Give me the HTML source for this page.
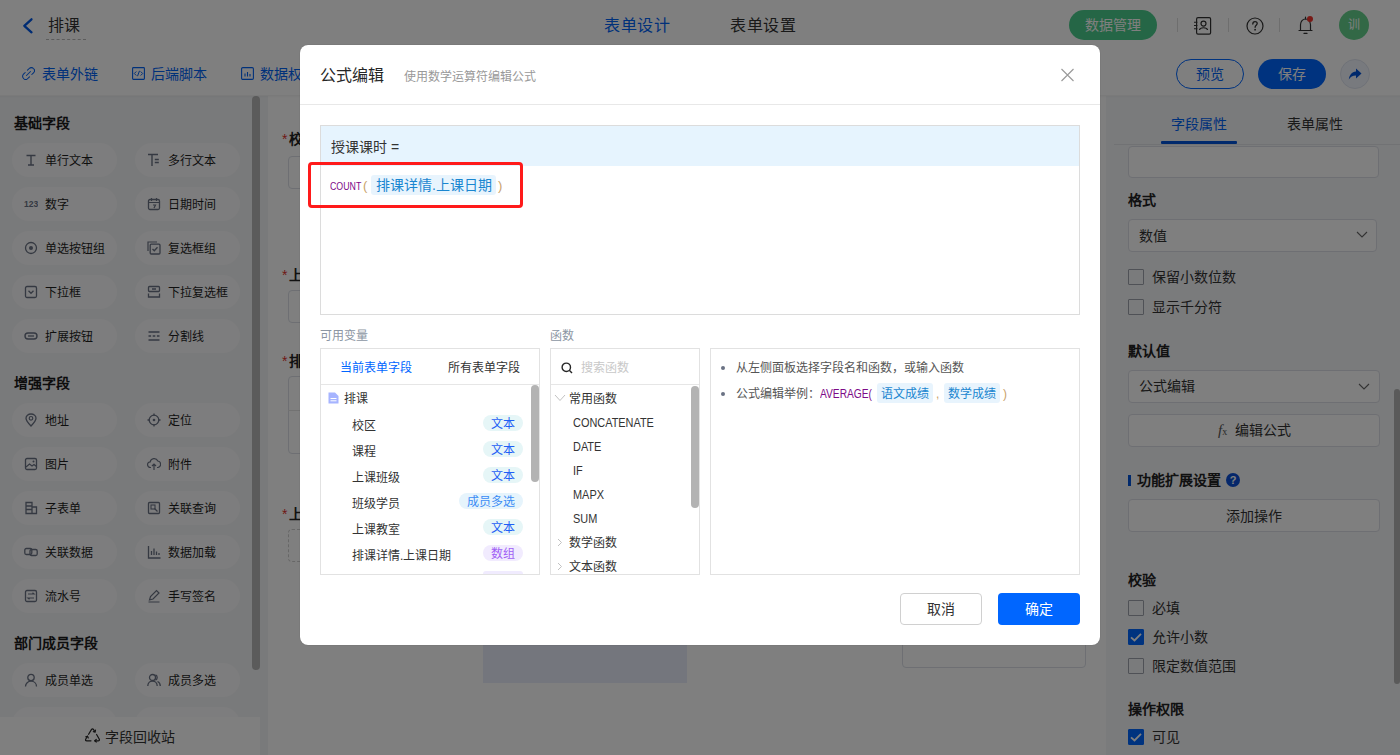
<!DOCTYPE html>
<html lang="zh-CN"><head><meta charset="utf-8">
<style>
*{box-sizing:border-box;margin:0;padding:0}
html,body{width:1400px;height:755px;overflow:hidden;background:#fff;font-family:"Liberation Sans",sans-serif;color:#333}
.a{position:absolute}
.t{white-space:nowrap;line-height:1}
/* header */
#hdr{left:0;top:0;width:1400px;height:51px;background:#fff;border-bottom:1px solid #f0f0f0}
#tb{left:0;top:50px;width:1400px;height:46px;background:#fff}
#side{left:0;top:96px;width:268px;height:659px;background:#f3f4f7}
#canvas{left:268px;top:96px;width:838px;height:659px;background:#fff}
#right{left:1106px;top:96px;width:294px;height:659px;background:#f5f6f8}
.chip{position:absolute;width:105px;height:34px;border-radius:17px;background:#fbfbfc}
.chip span{position:absolute;left:33px;top:11px;font-size:12px;line-height:14px;color:#1f1f1f;white-space:nowrap}
.chip svg{position:absolute;left:13px;top:10px}
.sh{position:absolute;left:14px;font-size:14px;font-weight:bold;color:#1a1a1a;line-height:16px;white-space:nowrap}
.inp{position:absolute;border:1px solid #dcdfe6;border-radius:4px;background:#fff}
.lbl{position:absolute;font-size:14px;font-weight:bold;color:#222;line-height:16px;white-space:nowrap}
.lbl i{color:#e0322c;font-style:normal;font-weight:normal;margin-right:2px}
.cb{position:absolute;left:1128px;width:16px;height:16px;border:1px solid #9ea3ad;border-radius:1px;background:transparent}
.cbk{background:#0066ff;border-color:#0066ff}
.cbt{position:absolute;left:1152px;font-size:14px;line-height:16px;color:#333;white-space:nowrap}
#mask{left:0;top:0;width:1400px;height:755px;background:rgba(0,0,0,.5)}
/* modal */
#modal{left:300px;top:45px;width:800px;height:600px;background:#fff;border-radius:8px;box-shadow:0 0 1px rgba(0,0,0,.35)}
.box{position:absolute;border:1px solid #e2e2e2;background:#fff}
.tag{position:absolute;height:16px;border-radius:8px;font-size:12px;line-height:19px;text-align:center;white-space:nowrap}
.vrow{position:absolute;left:352px;font-size:12px;line-height:14px;color:#333;white-space:nowrap}
.frow{position:absolute;left:573px;font-size:12px;line-height:14px;color:#333;white-space:nowrap;transform:scaleX(.91);transform-origin:0 0}
</style></head><body>
<!-- header -->
<div id="hdr" class="a"></div>
<svg class="a" style="left:21px;top:17px" width="14" height="17" viewBox="0 0 14 17"><path d="M10.5 2.3 L3.3 8.8 L10.5 15.3" fill="none" stroke="#0058e6" stroke-width="2.3" stroke-linecap="round" stroke-linejoin="round"/></svg>
<div class="a t" style="left:48px;top:18px;font-size:16px;line-height:16px;color:#333">排课</div>
<div class="a" style="left:46px;top:39px;width:40px;border-top:1px dashed #b8b8b8"></div>
<div class="a t" style="left:604px;top:18px;letter-spacing:.5px;font-size:16px;line-height:16px;color:#0062f5">表单设计</div>
<div class="a t" style="left:730px;top:18px;letter-spacing:.5px;font-size:16px;line-height:16px;color:#333">表单设置</div>
<div class="a" style="left:1069px;top:10px;width:88px;height:30px;border-radius:15px;background:#4bcd8c"></div>
<div class="a t" style="left:1085px;top:17px;font-size:14px;line-height:16px;color:#fff">数据管理</div>
<div class="a" style="left:1177px;top:18px;width:1px;height:14px;background:#ddd"></div>
<div class="a" style="left:1228px;top:18px;width:1px;height:14px;background:#ddd"></div>
<div class="a" style="left:1279px;top:18px;width:1px;height:14px;background:#ddd"></div>
<!-- contacts icon -->
<svg class="a" style="left:1193px;top:16px" width="20" height="20" viewBox="0 0 20 20"><rect x="3.6" y="1.6" width="14" height="16.6" rx="1.4" fill="none" stroke="#333" stroke-width="1.2"/><circle cx="10.5" cy="7.6" r="2.5" fill="none" stroke="#333" stroke-width="1.2"/><path d="M6.4 14 C7 11 14 11 14.6 14" fill="none" stroke="#333" stroke-width="1.2"/><path d="M1 6.2h3.4M1 9.5h3.4M1 12.8h3.4" stroke="#333" stroke-width="1.1"/></svg>
<!-- help -->
<svg class="a" style="left:1245px;top:16px" width="20" height="20" viewBox="0 0 20 20"><circle cx="10" cy="10" r="8" fill="none" stroke="#333" stroke-width="1.2"/><path d="M7.8 8 C7.8 6.5 8.8 5.6 10 5.6 C11.3 5.6 12.2 6.5 12.2 7.6 C12.2 9.2 10.1 9.4 10.1 11.3" fill="none" stroke="#333" stroke-width="1.3" stroke-linecap="round"/><circle cx="10.1" cy="13.7" r="0.9" fill="#333"/></svg>
<!-- bell -->
<svg class="a" style="left:1296px;top:15px" width="20" height="22" viewBox="0 0 20 22"><path d="M4.5 15.5 V9.8 C4.5 6.5 6.8 4 9.5 4 C12.2 4 14.5 6.5 14.5 9.8 V15.5 H16 H3 Z" fill="none" stroke="#333" stroke-width="1.2" stroke-linejoin="round"/><path d="M9.5 2.2V4M8 18.4H11" stroke="#333" stroke-width="1.2" stroke-linecap="round"/><circle cx="14" cy="4" r="3" fill="#f0342c"/></svg>
<div class="a" style="left:1339px;top:10px;width:30px;height:30px;border-radius:50%;background:#64d08c"></div>
<div class="a t" style="left:1348px;top:19px;font-size:12px;line-height:12px;color:#fff">训</div>

<!-- toolbar -->
<div id="tb" class="a"></div>
<svg class="a" style="left:22px;top:67px" width="13" height="13" viewBox="0 0 13 13"><path d="M5.5 3.2 L7.2 1.5 C8.4 0.3 10.4 0.3 11.5 1.5 C12.7 2.7 12.7 4.6 11.5 5.8 L9.8 7.5 M7.5 9.8 L5.8 11.5 C4.6 12.7 2.7 12.7 1.5 11.5 C0.3 10.3 0.3 8.4 1.5 7.2 L3.2 5.5 M4.5 8.5 L8.5 4.5" fill="none" stroke="#0062f5" stroke-width="1.05" stroke-linecap="round"/></svg>
<div class="a t" style="left:42px;top:67px;font-size:14px;line-height:14px;color:#0062f5">表单外链</div>
<svg class="a" style="left:132px;top:67px" width="13" height="13" viewBox="0 0 13 13"><rect x="0.6" y="0.6" width="11.8" height="11.8" rx="0.8" fill="none" stroke="#0062f5" stroke-width="1.1"/><path d="M4.3 4.5 L2.3 6.5 L4.3 8.5 M8.7 4.5 L10.7 6.5 L8.7 8.5 M7.5 3.8 L5.5 9.2" fill="none" stroke="#0062f5" stroke-width="1"/></svg>
<div class="a t" style="left:151px;top:67px;font-size:14px;line-height:14px;color:#0062f5">后端脚本</div>
<svg class="a" style="left:241px;top:67px" width="13" height="13" viewBox="0 0 13 13"><rect x="0.6" y="0.6" width="11.8" height="11.8" rx="1.2" fill="none" stroke="#0062f5" stroke-width="1.1"/><path d="M4 9.5V6.5M6.5 9.5V5M9 9.5V7" stroke="#0062f5" stroke-width="1.1"/></svg>
<div class="a t" style="left:260px;top:67px;font-size:14px;line-height:14px;color:#0062f5">数据权限</div>
<div class="a" style="left:1176px;top:59px;width:68px;height:30px;border-radius:15px;border:1px solid #0066ff;background:#fff"></div>
<div class="a t" style="left:1196px;top:67px;font-size:14px;line-height:14px;color:#0062f5">预览</div>
<div class="a" style="left:1258px;top:59px;width:68px;height:30px;border-radius:15px;background:#0066ff"></div>
<div class="a t" style="left:1278px;top:67px;font-size:14px;line-height:14px;color:#fff">保存</div>
<div class="a" style="left:1340px;top:59px;width:30px;height:30px;border-radius:50%;border:1px solid #dfe4ef;background:#f0f4fd"></div>
<svg class="a" style="left:1347px;top:66px" width="16" height="16" viewBox="0 0 16 16"><path d="M9 2.5 L14.5 7.5 L9 12.5 V9.6 C5.5 9.6 3.5 10.8 1.8 13.5 C2.3 9 4.8 5.8 9 5.4 Z" fill="#0052d9"/></svg>

<!-- sidebar -->
<div id="side" class="a"></div>
<div class="a" style="left:252px;top:96px;width:8px;height:574px;border-radius:4px;background:#b6b6b6"></div>
<div class="sh" style="top:115px">基础字段</div>
<div class="sh" style="top:375px">增强字段</div>
<div class="sh" style="top:635px">部门成员字段</div>
<div class="chip" style="left:12px;top:143px"><svg width="14" height="14" viewBox="0 0 14 14" style="left:12px"><path d="M2.5 2.5h9M7 2.5v9.5M4 12h6" stroke="#6a7284" stroke-width="1.4" fill="none"/></svg><span>单行文本</span></div>
<div class="chip" style="left:135px;top:143px"><svg width="14" height="14" viewBox="0 0 14 14" style="left:12px"><path d="M1 1.5h10M5 1.5v11.5M7.8 6.5h4M7.8 9.5h4" stroke="#6a7284" stroke-width="1.4" fill="none"/></svg><span>多行文本</span></div>
<div class="chip" style="left:12px;top:187px"><svg width="14" height="14" viewBox="0 0 14 14" style="left:12px"><text x="0" y="10" font-size="8.5" font-weight="bold" fill="#6a7284" font-family="Liberation Sans">123</text></svg><span>数字</span></div>
<div class="chip" style="left:135px;top:187px"><svg width="14" height="14" viewBox="0 0 14 14" style="left:12px"><rect x="1.5" y="2.5" width="11" height="10" rx="1.5" stroke="#6a7284" stroke-width="1.3" fill="none"/><path d="M4.5 1v3M9.5 1v3M1.5 5.5h11M6 8h2.5L7 11" stroke="#6a7284" stroke-width="1.2" fill="none"/></svg><span>日期时间</span></div>
<div class="chip" style="left:12px;top:231px"><svg width="14" height="14" viewBox="0 0 14 14" style="left:12px"><circle cx="7" cy="7" r="5.5" stroke="#6a7284" stroke-width="1.3" fill="none"/><circle cx="7" cy="7" r="2" fill="#6a7284"/></svg><span>单选按钮组</span></div>
<div class="chip" style="left:135px;top:231px"><svg width="14" height="14" viewBox="0 0 14 14" style="left:12px"><path d="M1 10V1h9" stroke="#6a7284" stroke-width="1.2" fill="none"/><rect x="3.2" y="3.2" width="9.8" height="9.8" rx="1" stroke="#6a7284" stroke-width="1.3" fill="none"/><path d="M5.5 8l1.8 1.8 3.2-3.5" stroke="#6a7284" stroke-width="1.3" fill="none"/></svg><span>复选框组</span></div>
<div class="chip" style="left:12px;top:275px"><svg width="14" height="14" viewBox="0 0 14 14" style="left:12px"><rect x="1.5" y="1.5" width="11" height="11" rx="1.5" stroke="#6a7284" stroke-width="1.3" fill="none"/><path d="M4.5 5.8L7 8.3l2.5-2.5" stroke="#6a7284" stroke-width="1.3" fill="none"/></svg><span>下拉框</span></div>
<div class="chip" style="left:135px;top:275px"><svg width="14" height="14" viewBox="0 0 14 14" style="left:12px"><rect x="1.5" y="1.5" width="11" height="5" rx="1" stroke="#6a7284" stroke-width="1.3" fill="none"/><path d="M1.5 8.5v3.5h11v-3.5M5 4h4" stroke="#6a7284" stroke-width="1.3" fill="none"/></svg><span>下拉复选框</span></div>
<div class="chip" style="left:12px;top:319px"><svg width="14" height="14" viewBox="0 0 14 14" style="left:12px"><rect x="1" y="4" width="12" height="6" rx="3" stroke="#6a7284" stroke-width="1.4" fill="none"/><path d="M4 7h6" stroke="#6a7284" stroke-width="1.3"/></svg><span>扩展按钮</span></div>
<div class="chip" style="left:135px;top:319px"><svg width="14" height="14" viewBox="0 0 14 14" style="left:12px"><path d="M1.5 3h11M1.5 7h2.6M5.7 7h2.6M9.9 7h2.6M1.5 11h11" stroke="#6a7284" stroke-width="1.3" fill="none"/></svg><span>分割线</span></div>
<div class="chip" style="left:12px;top:403px"><svg width="14" height="14" viewBox="0 0 14 14" style="left:12px"><path d="M7 13C3.5 9.3 2 7.2 2 5.2 2 2.7 4.2 1 7 1s5 1.7 5 4.2c0 2-1.5 4.1-5 7.8z" stroke="#6a7284" stroke-width="1.3" fill="none"/><circle cx="7" cy="5.3" r="1.8" stroke="#6a7284" stroke-width="1.2" fill="none"/></svg><span>地址</span></div>
<div class="chip" style="left:135px;top:403px"><svg width="14" height="14" viewBox="0 0 14 14" style="left:12px"><circle cx="7" cy="7" r="4.8" stroke="#6a7284" stroke-width="1.3" fill="none"/><circle cx="7" cy="7" r="1.3" fill="#6a7284"/><path d="M7 0.5v2.5M7 11v2.5M0.5 7h2.5M11 7h2.5" stroke="#6a7284" stroke-width="1.3"/></svg><span>定位</span></div>
<div class="chip" style="left:12px;top:447px"><svg width="14" height="14" viewBox="0 0 14 14" style="left:12px"><rect x="1.5" y="1.5" width="11" height="11" rx="1.5" stroke="#6a7284" stroke-width="1.3" fill="none"/><path d="M2 10l3.5-3 2.5 2 2-1.5 2.5 2" stroke="#6a7284" stroke-width="1.2" fill="none"/><circle cx="9.5" cy="4.5" r="1" fill="#6a7284"/></svg><span>图片</span></div>
<div class="chip" style="left:135px;top:447px"><svg width="14" height="14" viewBox="0 0 14 14" style="left:12px"><path d="M4 10.5H3.5a2.8 2.8 0 0 1-.3-5.6A4 4 0 0 1 10.8 4a3.3 3.3 0 0 1 .2 6.5H10M7 7v6M5 9l2-2 2 2" stroke="#6a7284" stroke-width="1.2" fill="none"/></svg><span>附件</span></div>
<div class="chip" style="left:12px;top:491px"><svg width="14" height="14" viewBox="0 0 14 14" style="left:12px"><path d="M2 1.5h6v11H2zM8 6h4.5v6.5H8M2 5h6M2 8.5h6" stroke="#6a7284" stroke-width="1.3" fill="none"/></svg><span>子表单</span></div>
<div class="chip" style="left:135px;top:491px"><svg width="14" height="14" viewBox="0 0 14 14" style="left:12px"><rect x="1.5" y="1.5" width="11" height="11" rx="1" stroke="#6a7284" stroke-width="1.3" fill="none"/><rect x="4" y="4" width="4" height="4" stroke="#6a7284" stroke-width="1.1" fill="none"/><path d="M7.5 7.5l3 3" stroke="#6a7284" stroke-width="1.3"/></svg><span>关联查询</span></div>
<div class="chip" style="left:12px;top:535px"><svg width="14" height="14" viewBox="0 0 14 14" style="left:12px"><rect x="0.8" y="3.5" width="7" height="6" rx="1.5" stroke="#6a7284" stroke-width="1.3" fill="none"/><rect x="6" y="4.5" width="7.2" height="6" rx="1.5" stroke="#6a7284" stroke-width="1.3" fill="none"/></svg><span>关联数据</span></div>
<div class="chip" style="left:135px;top:535px"><svg width="14" height="14" viewBox="0 0 14 14" style="left:12px"><path d="M1.5 1v12h12M4.5 10V6M7 10V3.5M9.5 10V6.5M12 10V8" stroke="#6a7284" stroke-width="1.3" fill="none"/></svg><span>数据加载</span></div>
<div class="chip" style="left:12px;top:579px"><svg width="14" height="14" viewBox="0 0 14 14" style="left:12px"><rect x="1.5" y="1.5" width="11" height="11" rx="1.5" stroke="#6a7284" stroke-width="1.3" fill="none"/><path d="M4 5h6l-1.5-1.3M10 9H4l1.5 1.3" stroke="#6a7284" stroke-width="1.2" fill="none"/></svg><span>流水号</span></div>
<div class="chip" style="left:135px;top:579px"><svg width="14" height="14" viewBox="0 0 14 14" style="left:12px"><path d="M2.5 11l1-3.5 6-6 2.5 2.5-6 6z M1.5 13h11" stroke="#6a7284" stroke-width="1.2" fill="none"/></svg><span>手写签名</span></div>
<div class="chip" style="left:12px;top:663px"><svg width="14" height="14" viewBox="0 0 14 14" style="left:12px"><circle cx="7" cy="4.5" r="3.2" stroke="#6a7284" stroke-width="1.3" fill="none"/><path d="M1.5 13.5c0-3.2 2.5-5.3 5.5-5.3s5.5 2.1 5.5 5.3" stroke="#6a7284" stroke-width="1.3" fill="none"/></svg><span>成员单选</span></div>
<div class="chip" style="left:135px;top:663px"><svg width="14" height="14" viewBox="0 0 14 14" style="left:12px"><circle cx="5.5" cy="4.5" r="3" stroke="#6a7284" stroke-width="1.3" fill="none"/><path d="M0.8 13c0-3 2.1-5 4.7-5s4.7 2 4.7 5M8.5 1.8a3 3 0 0 1 0 5.4M10.5 8.5c1.8.8 2.8 2.5 2.8 4.5" stroke="#6a7284" stroke-width="1.3" fill="none"/></svg><span>成员多选</span></div>
<div class="chip" style="left:12px;top:707px"><svg width="14" height="14" viewBox="0 0 14 14" style="left:12px"></svg><span>部门单选</span></div>
<div class="chip" style="left:135px;top:707px"><svg width="14" height="14" viewBox="0 0 14 14" style="left:12px"></svg><span>部门多选</span></div>
<div class="a" style="left:0;top:717px;width:260px;height:38px;background:#fff"></div>
<svg class="a" style="left:84px;top:727px" width="17" height="16" viewBox="0 0 17 16"><g fill="none" stroke="#262626" stroke-width="1.2" stroke-linejoin="round" stroke-linecap="round"><path d="M4.6 7.3 L7.4 2.6 Q8.5 1 9.6 2.6 L11 5"/><path d="M9.3 4.6 L11 5 L11.5 3.2"/><path d="M12.6 7.5 L15.2 12 Q16 13.8 14 13.8 L10.8 13.8"/><path d="M12.3 12.4 L10.8 13.8 L12.3 15"/><path d="M7 13.8 L2.8 13.8 Q0.9 13.8 1.8 12 L3.5 9.2"/><path d="M1.8 9.8 L3.5 9.2 L4.3 10.9"/></g></svg>
<div class="a t" style="left:105px;top:729px;font-size:14px;line-height:16px;color:#333">字段回收站</div>

<!-- canvas -->
<div id="canvas" class="a"></div>
<div class="lbl" style="left:282px;top:131px"><i>*</i>校区</div>
<div class="inp" style="left:288px;top:156px;width:400px;height:33px"></div>
<div class="lbl" style="left:282px;top:267px"><i>*</i>上课班级</div>
<div class="inp" style="left:288px;top:290px;width:400px;height:33px"></div>
<div class="lbl" style="left:282px;top:353px"><i>*</i>排课详情</div>
<div class="inp" style="left:288px;top:376px;width:600px;height:78px"></div>
<div class="a" style="left:288px;top:410px;width:600px;height:1px;background:#e4e4e4"></div>
<div class="lbl" style="left:282px;top:506px"><i>*</i>上课日期</div>
<div class="a" style="left:288px;top:529px;width:400px;height:33px;border:1px dashed #cfcfcf;border-radius:4px"></div>
<div class="a" style="left:483px;top:560px;width:204px;height:123px;background:#e9edfa"></div>
<div class="inp" style="left:902px;top:620px;width:184px;height:48px"></div>

<!-- right panel -->
<div id="right" class="a"></div>
<div class="a" style="left:1114px;top:144px;width:286px;height:1px;background:#e2e4e8"></div>
<div class="a t" style="left:1171px;top:117px;font-size:14px;line-height:14px;color:#0062f5">字段属性</div>
<div class="a t" style="left:1287px;top:117px;font-size:14px;line-height:14px;color:#333">表单属性</div>
<div class="a" style="left:1161px;top:141px;width:76px;height:3px;background:#0052d9;border-radius:1px"></div>
<div class="inp" style="left:1128px;top:146px;width:251px;height:32px"></div>
<div class="lbl" style="left:1128px;top:192px">格式</div>
<div class="inp" style="left:1128px;top:219px;width:249px;height:33px"></div>
<div class="a t" style="left:1139px;top:228px;font-size:14px;line-height:16px;color:#333">数值</div>
<svg class="a" style="left:1356px;top:231px" width="12" height="8" viewBox="0 0 12 8"><path d="M1 1 L6 6 L11 1" fill="none" stroke="#666" stroke-width="1.1"/></svg>
<div class="cb" style="top:269px"></div><div class="cbt" style="top:269px">保留小数位数</div>
<div class="cb" style="top:299px"></div><div class="cbt" style="top:299px">显示千分符</div>
<div class="lbl" style="left:1128px;top:343px">默认值</div>
<div class="inp" style="left:1128px;top:370px;width:252px;height:33px"></div>
<div class="a t" style="left:1139px;top:378px;font-size:14px;line-height:16px;color:#333">公式编辑</div>
<svg class="a" style="left:1358px;top:383px" width="12" height="8" viewBox="0 0 12 8"><path d="M1 1 L6 6 L11 1" fill="none" stroke="#666" stroke-width="1.1"/></svg>
<div class="inp" style="left:1128px;top:414px;width:252px;height:33px"></div>
<div class="a t" style="left:1218px;top:422px;font-size:15px;line-height:16px;color:#555;font-style:italic;font-family:'Liberation Serif',serif">f<span style="font-size:10px;font-style:normal">x</span></div>
<div class="a t" style="left:1235px;top:422px;font-size:14px;line-height:16px;color:#333">编辑公式</div>
<div class="a" style="left:1128px;top:475px;width:3px;height:11px;background:#0052d9"></div>
<div class="lbl" style="left:1137px;top:472px">功能扩展设置</div>
<div class="a" style="left:1226px;top:473px;width:14px;height:14px;border-radius:50%;background:#0a4fd6;color:#fff;font-size:11px;line-height:14px;text-align:center;font-weight:bold">?</div>
<div class="inp" style="left:1128px;top:499px;width:252px;height:33px"></div>
<div class="a t" style="left:1226px;top:508px;font-size:14px;line-height:16px;color:#333">添加操作</div>
<div class="lbl" style="left:1128px;top:572px">校验</div>
<div class="cb" style="top:600px"></div><div class="cbt" style="top:600px">必填</div>
<div class="cb cbk" style="top:629px"></div><svg class="a" style="left:1128px;top:629px" width="16" height="16" viewBox="0 0 16 16"><path d="M3 8.3 L6.5 11.5 L13 4.8" fill="none" stroke="#fff" stroke-width="1.8"/></svg><div class="cbt" style="top:629px">允许小数</div>
<div class="cb" style="top:658px"></div><div class="cbt" style="top:658px">限定数值范围</div>
<div class="lbl" style="left:1128px;top:701px">操作权限</div>
<div class="cb cbk" style="top:729px"></div><svg class="a" style="left:1128px;top:729px" width="16" height="16" viewBox="0 0 16 16"><path d="M3 8.3 L6.5 11.5 L13 4.8" fill="none" stroke="#fff" stroke-width="1.8"/></svg><div class="cbt" style="top:729px">可见</div>
<div class="a" style="left:1394px;top:389px;width:6px;height:295px;border-radius:3px;background:#b4b4b4"></div>

<div class="a" style="left:0;top:95px;width:1400px;height:3px;background:linear-gradient(rgba(0,0,0,.05),rgba(0,0,0,0))"></div>
<div id="mask" class="a"></div>

<!-- modal -->
<div id="modal" class="a"></div>
<div class="a t" style="left:320px;top:67px;font-size:16px;line-height:18px;color:#262626">公式编辑</div>
<div class="a t" style="left:404px;top:70px;font-size:12px;line-height:14px;color:#999">使用数学运算符编辑公式</div>
<svg class="a" style="left:1060px;top:68px" width="15" height="14" viewBox="0 0 15 14"><path d="M1.5 1 L13.5 13 M13.5 1 L1.5 13" stroke="#9a9a9a" stroke-width="1.15"/></svg>
<div class="a" style="left:300px;top:104px;width:800px;height:1px;background:#e8e8e8"></div>
<!-- editor -->
<div class="box" style="left:320px;top:125px;width:760px;height:190px;border-color:#dcdcdc"></div>
<div class="a" style="left:321px;top:126px;width:758px;height:40px;background:#e6f4fe"></div>
<div class="a t" style="left:331px;top:139px;font-size:14px;line-height:16px;color:#333">授课课时 =</div>
<div class="a t" style="left:330px;top:180px;font-size:11px;line-height:12px;color:#7d0a88;transform:scaleX(.8);transform-origin:0 0">COUNT</div>
<div class="a t" style="left:363px;top:178px;font-size:13px;line-height:15px;color:#c9a26a">(</div>
<div class="a" style="left:371px;top:175px;width:125px;height:20px;border-radius:3px;background:#e8f4fd"></div>
<div class="a t" style="left:376px;top:177px;font-size:14px;line-height:16px;color:#1a86d0">排课详情.上课日期</div>
<div class="a t" style="left:498px;top:178px;font-size:13px;line-height:15px;color:#c9a26a">)</div>
<div class="a" style="left:308px;top:162px;width:215px;height:46px;border:3px solid #ff1a1a;border-radius:4px"></div>
<!-- labels -->
<div class="a t" style="left:320px;top:329px;font-size:12px;line-height:14px;color:#8c96a3">可用变量</div>
<div class="a t" style="left:550px;top:329px;font-size:12px;line-height:14px;color:#8c96a3">函数</div>
<!-- var panel -->
<div class="box" style="left:320px;top:348px;width:220px;height:227px"></div>
<div class="a t" style="left:340px;top:361px;font-size:12px;line-height:14px;color:#0066ff">当前表单字段</div>
<div class="a t" style="left:448px;top:361px;font-size:12px;line-height:14px;color:#333">所有表单字段</div>
<div class="a" style="left:321px;top:384px;width:218px;height:1px;background:#e6e6e6"></div>
<svg class="a" style="left:328px;top:392px" width="11" height="12" viewBox="0 0 11 12"><path d="M0.5 0.5h6.5l3.5 3.5v7.5h-10z" fill="#a6b4ff"/><path d="M2.5 6.5h6M2.5 8.8h6" stroke="#fff" stroke-width="1"/></svg>
<div class="a t" style="left:344px;top:392px;font-size:12px;line-height:14px;color:#333">排课</div>
<div class="vrow" style="top:419px">校区</div>
<div class="vrow" style="top:445px">课程</div>
<div class="vrow" style="top:471px">上课班级</div>
<div class="vrow" style="top:497px">班级学员</div>
<div class="vrow" style="top:523px">上课教室</div>
<div class="vrow" style="top:549px">排课详情.上课日期</div>
<div class="tag" style="left:483px;top:415px;width:40px;background:#e6f6f7;color:#1f5ff5">文本</div>
<div class="tag" style="left:483px;top:441px;width:40px;background:#e6f6f7;color:#1f5ff5">文本</div>
<div class="tag" style="left:483px;top:467px;width:40px;background:#e6f6f7;color:#1f5ff5">文本</div>
<div class="tag" style="left:459px;top:493px;width:64px;background:#e6f4fc;color:#3b8cf5">成员多选</div>
<div class="tag" style="left:483px;top:519px;width:40px;background:#e6f6f7;color:#1f5ff5">文本</div>
<div class="tag" style="left:483px;top:545px;width:40px;background:#f1ebfe;color:#a05ef5">数组</div>
<div class="a" style="left:483px;top:571px;width:40px;height:3px;border-radius:8px 8px 0 0;background:#f0ebfe"></div>
<div class="a" style="left:531px;top:385px;width:8px;height:97px;border-radius:4px;background:#b3b3b3"></div>
<!-- func panel -->
<div class="box" style="left:550px;top:348px;width:150px;height:227px"></div>
<svg class="a" style="left:561px;top:362px" width="12" height="12" viewBox="0 0 12 12"><circle cx="5.3" cy="5.3" r="4.2" fill="none" stroke="#262626" stroke-width="1.4"/><path d="M8.3 8.3 L11 11" stroke="#262626" stroke-width="1.4"/></svg>
<div class="a t" style="left:581px;top:361px;font-size:12px;line-height:14px;color:#c8c8c8">搜索函数</div>
<div class="a" style="left:551px;top:384px;width:148px;height:1px;background:#e6e6e6"></div>
<svg class="a" style="left:554px;top:394px" width="12" height="8" viewBox="0 0 12 8"><path d="M1 1 L6 6.5 L11 1" fill="none" stroke="#c2c2c2" stroke-width="1"/></svg>
<div class="a t" style="left:569px;top:392px;font-size:12px;line-height:14px;color:#333">常用函数</div>
<div class="frow" style="top:416px">CONCATENATE</div>
<div class="frow" style="top:440px">DATE</div>
<div class="frow" style="top:464px">IF</div>
<div class="frow" style="top:488px">MAPX</div>
<div class="frow" style="top:512px">SUM</div>
<svg class="a" style="left:557px;top:538px" width="6" height="9" viewBox="0 0 6 9"><path d="M1 1 L4.5 4.5 L1 8" fill="none" stroke="#c2c2c2" stroke-width="1"/></svg>
<div class="a t" style="left:569px;top:536px;font-size:12px;line-height:14px;color:#333">数学函数</div>
<svg class="a" style="left:557px;top:562px" width="6" height="9" viewBox="0 0 6 9"><path d="M1 1 L4.5 4.5 L1 8" fill="none" stroke="#c2c2c2" stroke-width="1"/></svg>
<div class="a t" style="left:569px;top:560px;font-size:12px;line-height:14px;color:#333">文本函数</div>
<div class="a" style="left:691px;top:386px;width:8px;height:122px;border-radius:4px;background:#b3b3b3"></div>
<!-- explanation -->
<div class="box" style="left:710px;top:348px;width:370px;height:227px"></div>
<div class="a" style="left:721px;top:366px;width:4px;height:4px;border-radius:50%;background:#6a7284"></div>
<div class="a t" style="left:736px;top:361px;font-size:12px;line-height:14px;color:#555">从左侧面板选择字段名和函数，或输入函数</div>
<div class="a" style="left:721px;top:392px;width:4px;height:4px;border-radius:50%;background:#6a7284"></div>
<div class="a t" style="left:736px;top:387px;font-size:12px;line-height:14px;color:#555">公式编辑举例：</div>
<div class="a t" style="left:820px;top:387px;font-size:12px;line-height:14px;color:#7d0a88;transform:scaleX(.85);transform-origin:0 0">AVERAGE(</div>
<div class="a" style="left:877px;top:383px;width:56px;height:20px;border-radius:3px;background:#e8f4fd"></div>
<div class="a t" style="left:881px;top:387px;font-size:12px;line-height:14px;color:#1a86d0">语文成绩</div>
<div class="a t" style="left:936px;top:387px;font-size:12px;line-height:14px;color:#c9a26a">,</div>
<div class="a" style="left:944px;top:383px;width:56px;height:20px;border-radius:3px;background:#e8f4fd"></div>
<div class="a t" style="left:948px;top:387px;font-size:12px;line-height:14px;color:#1a86d0">数学成绩</div>
<div class="a t" style="left:1003px;top:387px;font-size:12px;line-height:14px;color:#c9a26a">)</div>
<!-- buttons -->
<div class="a" style="left:900px;top:593px;width:82px;height:32px;border:1px solid #d0d0d0;border-radius:4px;background:#fff"></div>
<div class="a t" style="left:927px;top:601px;font-size:14px;line-height:16px;color:#333">取消</div>
<div class="a" style="left:998px;top:593px;width:82px;height:32px;border-radius:4px;background:#0066ff"></div>
<div class="a t" style="left:1025px;top:601px;font-size:14px;line-height:16px;color:#fff">确定</div>

</body></html>
